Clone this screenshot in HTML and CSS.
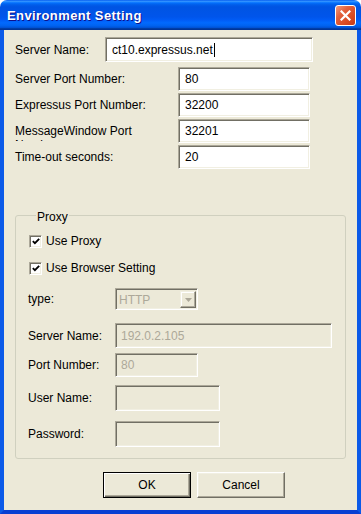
FILE: index.html
```html
<!DOCTYPE html>
<html lang="en">
<head>
    <meta charset="UTF-8">
    <meta name="viewport" content="width=device-width, initial-scale=1.0">
    <title>Environment Setting</title>
    <link rel="stylesheet" href="styles.css">
</head>
<body>
    <div class="window">
        <div class="titlebar">
            <span class="title">Environment Setting</span>
            <button class="close" aria-label="Close">
                <svg width="11" height="11" viewBox="0 0 11 11">
                    <path d="M1.5 1.5 L9.5 9.5 M9.5 1.5 L1.5 9.5" stroke="#fff" stroke-width="2.2" stroke-linecap="square" fill="none"/>
                </svg>
            </button>
        </div>

        <div class="client">
            <!-- 接続設定 -->
            <div class="row first">
                <span class="lbl lbl-short">Server Name:</span>
                <div class="field wide">ct10.expressus.net<span class="caret"></span></div>
            </div>
            <div class="row second">
                <span class="lbl">Server Port Number:</span>
                <div class="field">80</div>
            </div>
            <div class="row">
                <span class="lbl">Expressus Port Number:</span>
                <div class="field">32200</div>
            </div>
            <div class="row">
                <span class="lbl lbl-clip">MessageWindow Port Number:</span>
                <div class="field">32201</div>
            </div>
            <div class="row">
                <span class="lbl">Time-out seconds:</span>
                <div class="field">20</div>
            </div>

            <!-- プロキシ設定 -->
            <div class="group">
                <div class="group-title">Proxy</div>
                <div class="prow check-row first-check">
                    <span class="checkbox">
                        <svg width="11" height="11" viewBox="0 0 11 11"><path d="M2 5 L4.3 7.3 L9 2.6" stroke="#000" stroke-width="2" fill="none"/></svg>
                    </span>
                    <span>Use Proxy</span>
                </div>
                <div class="prow check-row">
                    <span class="checkbox">
                        <svg width="11" height="11" viewBox="0 0 11 11"><path d="M2 5 L4.3 7.3 L9 2.6" stroke="#000" stroke-width="2" fill="none"/></svg>
                    </span>
                    <span>Use Browser Setting</span>
                </div>
                <div class="prow type-row">
                    <span class="plbl">type:</span>
                    <div class="select">
                        <span class="select-text">HTTP</span>
                        <span class="select-btn">
                            <svg width="7" height="4" viewBox="0 0 7 4"><path d="M0 0 H7 L3.5 4 Z" fill="#aca899"/></svg>
                        </span>
                    </div>
                </div>
                <div class="prow host-row">
                    <span class="plbl">Server Name:</span>
                    <div class="field disabled host">192.0.2.105</div>
                </div>
                <div class="prow port-row">
                    <span class="plbl">Port Number:</span>
                    <div class="field disabled port">80</div>
                </div>
                <div class="prow user-row">
                    <span class="plbl">User Name:</span>
                    <div class="field disabled user"></div>
                </div>
                <div class="prow pass-row">
                    <span class="plbl">Password:</span>
                    <div class="field disabled user"></div>
                </div>
            </div>

            <div class="buttons">
                <button class="btn default">OK</button>
                <button class="btn">Cancel</button>
            </div>
        </div>
    </div>
</body>
</html>
```

FILE: styles.css
```css
body {
    margin: 0;
    background: #fff;
    font-family: "Liberation Sans", Arial, sans-serif;
    font-size: 12px;
    color: #000;
}
.window {
    width: 361px;
    height: 514px;
    display: flex;
    flex-direction: column;
}

/* タイトルバー */
.titlebar {
    height: 30px;
    flex: none;
    box-sizing: border-box;
    display: flex;
    align-items: center;
    justify-content: space-between;
    padding: 0 5px 0 7px;
    border-radius: 7px 7px 0 0;
    background: linear-gradient(to bottom, #0058ee 0%, #3593ff 4%, #288eff 6%, #127dff 8%, #036ffc 10%, #0262ee 14%, #0057e5 20%, #0054e3 24%, #0055eb 56%, #005bf5 66%, #026afe 76%, #0062ef 86%, #0052d6 92%, #0040ab 94%, #003092 100%);
}
.title {
    color: #fff;
    font-weight: bold;
    font-size: 13px;
    letter-spacing: 0.4px;
    text-shadow: 1px 1px #0f1089;
    margin-top: 1px;
}
.close {
    width: 21px;
    height: 21px;
    padding: 0;
    border: 1px solid #fff;
    border-radius: 3px;
    background: linear-gradient(135deg, #f29b7e 0%, #e2603c 35%, #d8481f 75%, #c13b1b 100%);
    display: flex;
    align-items: center;
    justify-content: center;
    margin-top: 1px;
}

/* クライアント領域 */
.client {
    flex: 1;
    background: #ece9d8;
    border: 4px solid #0b5ae8;
    border-top: 0;
    border-bottom-color: #083fd2;
    padding: 7px 11px 0;
}
.row {
    display: flex;
    align-items: center;
    height: 24px;
    margin-top: 2px;
}
.row.first {
    height: 25px;
    margin-top: 0;
}
.row.second {
    margin-top: 5px;
}
.lbl {
    width: 163px;
    flex: none;
    line-height: 14px;
}
.lbl-short {
    width: 90px;
}
.lbl-clip {
    align-self: flex-start;
    margin-top: 5px;
    height: 17px;
    overflow: hidden;
}
.field {
    box-sizing: border-box;
    height: 100%;
    width: 132px;
    background: #fff;
    border: 1px solid;
    border-color: #aca899 #fff #fff #aca899;
    box-shadow: inset 1px 1px #716f64, inset -1px -1px #f1efe2;
    padding-left: 6px;
    display: flex;
    align-items: center;
    white-space: nowrap;
}
.field.wide {
    width: 208px;
}
.caret {
    display: inline-block;
    width: 1px;
    height: 14px;
    background: #000;
    margin-left: 1px;
}
.field.disabled {
    background: #ece9d8;
    color: #aca899;
    padding-left: 5px;
}

/* プロキシ グループ */
.group {
    margin-top: 46px;
    height: 244px;
    box-sizing: border-box;
    border: 1px solid #d0d0bf;
    border-radius: 3px;
    padding: 0 0 11px 12px;
}
.group-title {
    width: fit-content;
    margin: -6px 0 0 8px;
    padding: 0 1px;
    line-height: 14px;
    background: #ece9d8;
}
.prow {
    display: flex;
    align-items: center;
}
.plbl {
    width: 87px;
    flex: none;
}
.check-row {
    height: 20px;
    margin-top: 7px;
    padding-left: 1px;
}
.checkbox {
    width: 13px;
    height: 13px;
    box-sizing: border-box;
    background: #fff;
    border: 1px solid;
    border-color: #aca899 #fff #fff #aca899;
    box-shadow: inset 1px 1px #716f64, inset -1px -1px #f1efe2;
    display: flex;
    align-items: center;
    justify-content: center;
    margin-right: 4px;
}
.checkbox svg {
    margin: 1px 0 0 1px;
}
.type-row {
    height: 22px;
    margin-top: 10px;
}
.select {
    box-sizing: border-box;
    width: 83px;
    height: 100%;
    background: #ece9d8;
    border: 1px solid;
    border-color: #aca899 #fff #fff #aca899;
    box-shadow: inset 1px 1px #716f64, inset -1px -1px #f1efe2;
    display: flex;
    align-items: center;
    justify-content: space-between;
    padding: 2px 1px 1px 3px;
    color: #aca899;
}
.select-btn {
    box-sizing: border-box;
    width: 16px;
    height: 100%;
    border: 1px solid;
    border-color: #f1efe2 #716f64 #716f64 #f1efe2;
    box-shadow: inset -1px -1px #aca899, inset 1px 1px #fff;
    display: flex;
    align-items: center;
    justify-content: center;
}
.host-row {
    height: 25px;
    margin-top: 13px;
}
.field.host {
    width: 217px;
}
.port-row {
    height: 24px;
    margin-top: 5px;
}
.field.port {
    width: 83px;
}
.user-row {
    height: 26px;
    margin-top: 8px;
}
.pass-row {
    height: 26px;
    margin-top: 10px;
}
.field.user {
    width: 105px;
}

/* ボタン */
.buttons {
    display: flex;
    gap: 6px;
    margin-top: 13px;
    padding-left: 88px;
}
.btn {
    width: 88px;
    height: 26px;
    box-sizing: border-box;
    font-family: inherit;
    font-size: 12px;
    color: #000;
    background: #ece9d8;
    border: 1px solid;
    border-color: #fff #716f64 #716f64 #fff;
    box-shadow: inset -1px -1px #aca899, inset 1px 1px #f1efe2;
    padding: 0;
}
.btn.default {
    border-color: #000;
    box-shadow: inset 1px 1px #fff, inset -1px -1px #716f64, inset -2px -2px #aca899;
}
```
